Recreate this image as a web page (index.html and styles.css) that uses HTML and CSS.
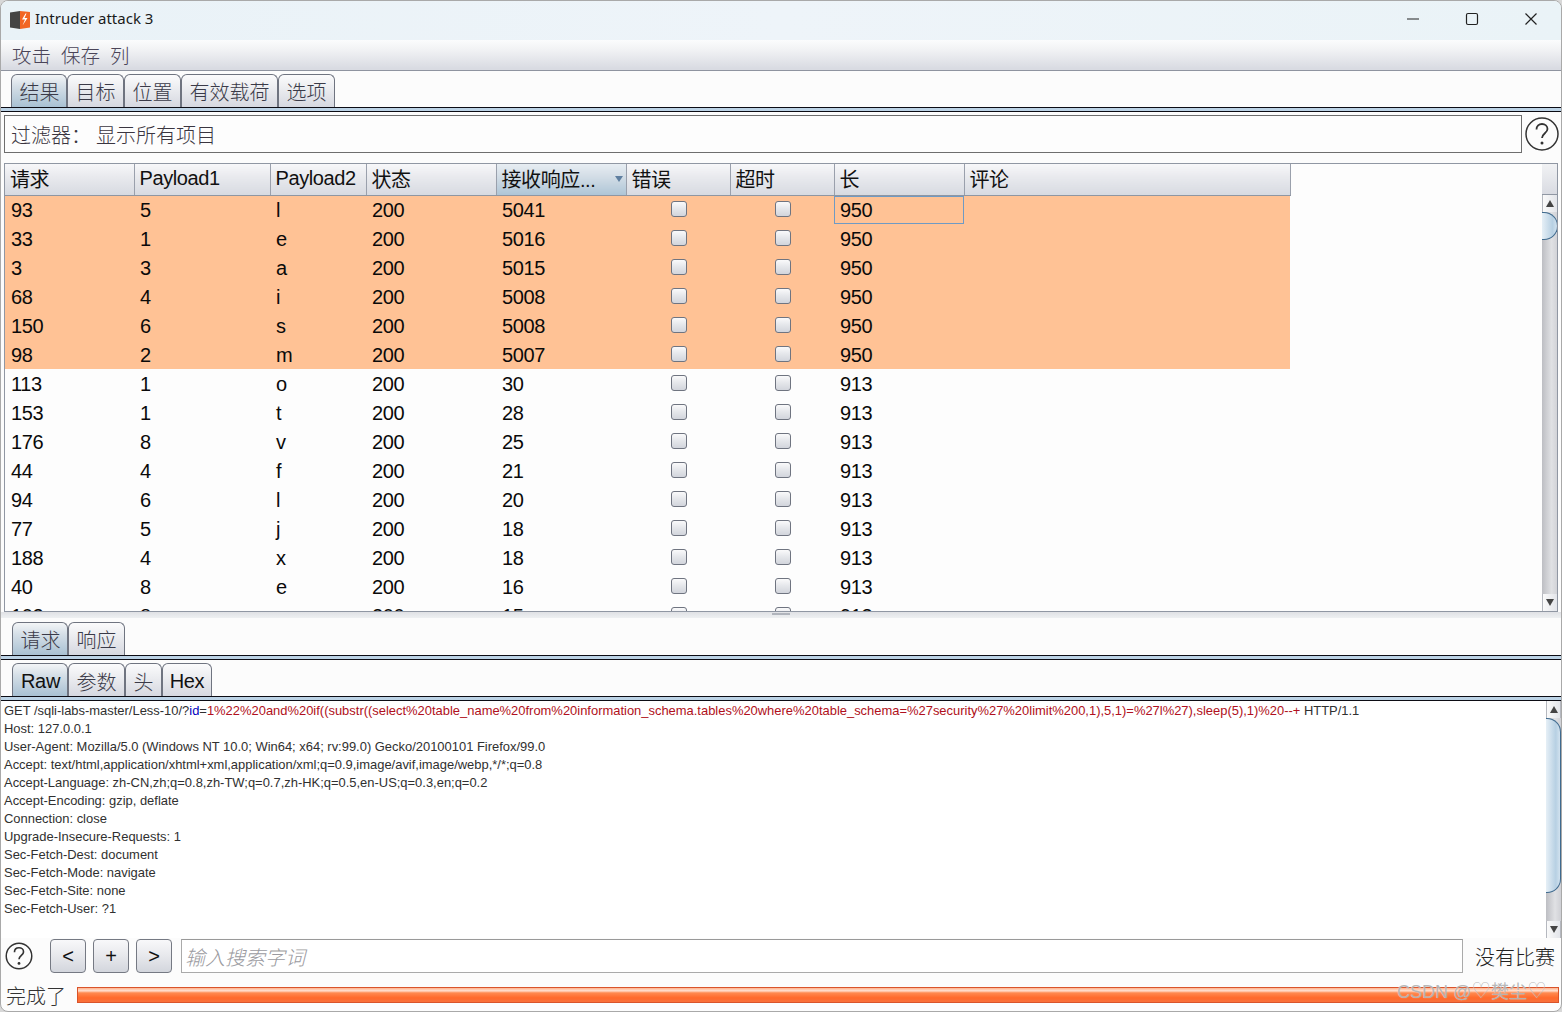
FILE: index.html
```html
<!DOCTYPE html>
<html lang="zh">
<head>
<meta charset="utf-8">
<title>Intruder attack 3</title>
<link rel="stylesheet" href="styles.css">
</head>
<body>
<div class="window">
  <header class="titlebar">
    <svg class="logo" width="20" height="20" viewBox="0 0 20 20"><path d="M0 2.500L10 1v18L0 17.500z" fill="#444"/><path d="M10 1l10 1v15.500L10 19z" fill="#f26522"/><path d="M15.500 3.500l-3.500 6h3l-2.500 6 5-7.500h-3l2-4.500z" fill="#fff"/></svg>
    <span class="title-text">Intruder attack 3</span>
    <div class="winctrls">
      <svg width="14" height="14" viewBox="0 0 14 14"><path d="M1 7h12" stroke="#222" stroke-width="1.200"/></svg>
      <svg width="14" height="14" viewBox="0 0 14 14"><rect x="1.500" y="1.500" width="11" height="11" rx="1.500" fill="none" stroke="#222" stroke-width="1.200"/></svg>
      <svg width="14" height="14" viewBox="0 0 14 14"><path d="M1.500 1.500l11 11M12.500 1.500l-11 11" stroke="#222" stroke-width="1.200"/></svg>
    </div>
  </header>
  <nav class="menubar"><span>攻击</span><span>保存</span><span>列</span></nav>

  <div class="tabs tabs-main">
    <span class="tab active">结果</span><span class="tab">目标</span><span class="tab">位置</span><span class="tab tab-wide">有效载荷</span><span class="tab">选项</span>
  </div>
  <div class="tabline"></div>

  <div class="filter-row">
    <div class="filter-box"><span class="filter-label">过滤器：</span><span>显示所有项目</span></div>
    <svg class="help help-lg" width="34" height="34" viewBox="0 0 34 34"><circle cx="17" cy="17" r="16" fill="none" stroke="#333" stroke-width="1.500"/><path d="M11.500 12.500c0-3.500 2.500-5.500 5.500-5.500s5.500 2 5.500 5c0 4-5.500 4.500-5.500 9" fill="none" stroke="#333" stroke-width="1.800"/><circle cx="17" cy="26" r="1.500" fill="#333"/></svg>
  </div>

  <section class="table-pane">
    <div class="table-scroll">
      <table class="results">
        <colgroup><col class="c1"><col class="c2"><col class="c3"><col class="c4"><col class="c5"><col class="c6"><col class="c7"><col class="c8"><col class="c9"></colgroup>
        <thead>
          <tr><th>请求</th><th>Payload1</th><th>Payload2</th><th>状态</th><th class="sorted">接收响应...<i class="sort-arrow"></i></th><th>错误</th><th>超时</th><th>长</th><th>评论</th></tr>
        </thead>
        <tbody>
          <tr class="hit"><td>93</td><td>5</td><td>l</td><td>200</td><td>5041</td><td class="ck"><i></i></td><td class="ck"><i></i></td><td class="focus">950</td><td></td></tr>
          <tr class="hit"><td>33</td><td>1</td><td>e</td><td>200</td><td>5016</td><td class="ck"><i></i></td><td class="ck"><i></i></td><td>950</td><td></td></tr>
          <tr class="hit"><td>3</td><td>3</td><td>a</td><td>200</td><td>5015</td><td class="ck"><i></i></td><td class="ck"><i></i></td><td>950</td><td></td></tr>
          <tr class="hit"><td>68</td><td>4</td><td>i</td><td>200</td><td>5008</td><td class="ck"><i></i></td><td class="ck"><i></i></td><td>950</td><td></td></tr>
          <tr class="hit"><td>150</td><td>6</td><td>s</td><td>200</td><td>5008</td><td class="ck"><i></i></td><td class="ck"><i></i></td><td>950</td><td></td></tr>
          <tr class="hit"><td>98</td><td>2</td><td>m</td><td>200</td><td>5007</td><td class="ck"><i></i></td><td class="ck"><i></i></td><td>950</td><td></td></tr>
          <tr><td>113</td><td>1</td><td>o</td><td>200</td><td>30</td><td class="ck"><i></i></td><td class="ck"><i></i></td><td>913</td><td></td></tr>
          <tr><td>153</td><td>1</td><td>t</td><td>200</td><td>28</td><td class="ck"><i></i></td><td class="ck"><i></i></td><td>913</td><td></td></tr>
          <tr><td>176</td><td>8</td><td>v</td><td>200</td><td>25</td><td class="ck"><i></i></td><td class="ck"><i></i></td><td>913</td><td></td></tr>
          <tr><td>44</td><td>4</td><td>f</td><td>200</td><td>21</td><td class="ck"><i></i></td><td class="ck"><i></i></td><td>913</td><td></td></tr>
          <tr><td>94</td><td>6</td><td>l</td><td>200</td><td>20</td><td class="ck"><i></i></td><td class="ck"><i></i></td><td>913</td><td></td></tr>
          <tr><td>77</td><td>5</td><td>j</td><td>200</td><td>18</td><td class="ck"><i></i></td><td class="ck"><i></i></td><td>913</td><td></td></tr>
          <tr><td>188</td><td>4</td><td>x</td><td>200</td><td>18</td><td class="ck"><i></i></td><td class="ck"><i></i></td><td>913</td><td></td></tr>
          <tr><td>40</td><td>8</td><td>e</td><td>200</td><td>16</td><td class="ck"><i></i></td><td class="ck"><i></i></td><td>913</td><td></td></tr>
          <tr><td>102</td><td>8</td><td>e</td><td>200</td><td>15</td><td class="ck"><i></i></td><td class="ck"><i></i></td><td>913</td><td></td></tr>
        </tbody>
      </table>
    </div>
    <div class="vscroll vscroll-table">
      <div class="vs-corner"></div>
      <div class="vs-btn"><i class="up"></i></div>
      <div class="vs-track"><div class="vs-thumb thumb-small"></div></div>
      <div class="vs-btn"><i class="down"></i></div>
    </div>
  </section>

  <div class="splitter"><i class="grip"></i></div>

  <div class="tabs tabs-sub">
    <span class="tab active">请求</span><span class="tab">响应</span>
  </div>
  <div class="tabline"></div>
  <div class="tabs tabs-raw">
    <span class="tab active latin">Raw</span><span class="tab">参数</span><span class="tab tab-one">头</span><span class="tab latin tab-hex">Hex</span>
  </div>
  <div class="tabline"></div>

  <section class="raw-pane">
    <pre class="raw">GET /sqli-labs-master/Less-10/?<b class="k">id</b>=<b class="v">1%22%20and%20if((substr((select%20table_name%20from%20information_schema.tables%20where%20table_schema=%27security%27%20limit%200,1),5,1)=%27l%27),sleep(5),1)%20--+</b> HTTP/1.1
Host: 127.0.0.1
User-Agent: Mozilla/5.0 (Windows NT 10.0; Win64; x64; rv:99.0) Gecko/20100101 Firefox/99.0
Accept: text/html,application/xhtml+xml,application/xml;q=0.9,image/avif,image/webp,*/*;q=0.8
Accept-Language: zh-CN,zh;q=0.8,zh-TW;q=0.7,zh-HK;q=0.5,en-US;q=0.3,en;q=0.2
Accept-Encoding: gzip, deflate
Connection: close
Upgrade-Insecure-Requests: 1
Sec-Fetch-Dest: document
Sec-Fetch-Mode: navigate
Sec-Fetch-Site: none
Sec-Fetch-User: ?1</pre>
    <div class="vscroll vscroll-raw">
      <div class="vs-btn"><i class="up"></i></div>
      <div class="vs-track"><div class="vs-thumb thumb-long"></div></div>
      <div class="vs-btn"><i class="down"></i></div>
    </div>
  </section>

  <div class="search-row">
    <svg class="help" width="28" height="28" viewBox="0 0 34 34"><circle cx="17" cy="17" r="15.500" fill="none" stroke="#333" stroke-width="1.800"/><path d="M11.500 12.500c0-3.500 2.500-5.500 5.500-5.500s5.500 2 5.500 5c0 4-5.500 4.500-5.500 9" fill="none" stroke="#333" stroke-width="2"/><circle cx="17" cy="26" r="1.700" fill="#333"/></svg>
    <button class="btn">&lt;</button>
    <button class="btn">+</button>
    <button class="btn">&gt;</button>
    <div class="search-input">输入搜索字词</div>
    <span class="matches">没有比赛</span>
  </div>

  <footer class="status">
    <span class="status-text">完成了</span>
    <div class="progress"></div>
    <span class="watermark">CSDN @<span class="heart">♡</span>樊尘<span class="heart">♡</span></span>
  </footer>
</div>
</body>
</html>
```
FILE: styles.css
```css
* { box-sizing: border-box; }
html, body { margin: 0; padding: 0; background: #d8d8d8; }
body { width: 1562px; height: 1012px; overflow: hidden; font-family: "Noto Sans CJK SC", "Liberation Sans", serif; }
.window {
  position: relative;
  width: 1562px; height: 1012px;
  display: flex; flex-direction: column;
  background: #fcfcfc;
  border: 1px solid #a9a9a9;
  border-radius: 8px;
  overflow: hidden;
  color: #222;
}
.titlebar {
  height: 39px; flex: none;
  display: flex; align-items: center;
  padding-left: 9px;
  background: linear-gradient(90deg, #e9f2f7, #eef4f9 50%, #eaf3f7);
}
.logo { flex: none; margin-right: 5px; margin-top: -1px; }
.title-text { font: 15px "Noto Sans", sans-serif; color: #1a1a1a; margin-top: -5px; }
.winctrls { margin-left: auto; display: flex; gap: 45px; padding-right: 23px; margin-top: -3px; }
.menubar {
  height: 31px; flex: none;
  display: flex; gap: 10px; align-items: center;
  padding: 0 0 1px 11px;
  font-size: 19.500px; font-weight: 300; color: #4a4458;
  background: linear-gradient(#fbfcfd, #f2f3f5 30%, #d9dbe2 95%);
  border-bottom: 1px solid #8f94a0;
}
.tabs { display: flex; flex: none; align-items: flex-end; padding-left: 10px; }
.tabs-main { height: 36px; }
.tabs-sub { height: 34px; margin-top: 3px; padding-left: 11px; }
.tabs-raw { height: 33px; margin-top: 3px; padding-left: 11px; }
.tabs-raw .tab { padding-top: 2px; }
.tab {
  height: 33px;
  width: 57px;
  display: flex; align-items: center; justify-content: center;
  font-size: 20px; font-weight: 300; color: #3a3a48;
  border: 1px solid #6f7480; border-bottom: 0; border-radius: 6px 6px 0 0;
  background: linear-gradient(#fbfbfc, #eeeff2 35%, #d6d8e0);
}
.tab.active { width: 56px; padding-left: 1px; background: linear-gradient(#f3f5f7, #d5dfe7 35%, #a9c1d3); }
.tab-wide { width: 97px; }
.tab-one { width: 37px; }
.tab-hex { width: 50px; }
.tab.latin { font-family: "Liberation Sans", sans-serif; font-weight: 400; color: #111; letter-spacing: -.3px; }
.tabline {
  height: 5px; flex: none;
  background: #bcd3e6;
  border-top: 1px solid #0c0c14; border-bottom: 1px solid #0c0c14;
}
.filter-row { flex: none; display: flex; align-items: center; height: 38px; margin-top: 3px; padding-left: 3px; }
.filter-box {
  width: 1518px; height: 38px;
  border: 1px solid #6e6e6e;
  display: flex; align-items: center;
  padding-left: 6px; font-size: 20px; font-weight: 300; color: #3a3540;
  background: #fdfdfd;
}
.filter-label { width: 85px; }
.help { flex: none; }
.help-lg { margin-left: 3px; }
.table-pane {
  flex: none; height: 449px; margin: 10px 3px 0 3px;
  display: flex;
  border: 1px solid #9097a3;
  background: #fdfdfd;
  overflow: hidden;
}
.table-scroll { width: 1537px; flex: none; overflow: hidden; }
.results { border-collapse: collapse; table-layout: fixed; width: 1285px; font-family: "Liberation Sans", sans-serif; }
.c1 { width: 129px; } .c2 { width: 136px; } .c3 { width: 96px; } .c4 { width: 130px; } .c5 { width: 130px; }
.c6 { width: 104px; } .c7 { width: 104px; } .c8 { width: 130px; } .c9 { width: 326px; }
.results th {
  height: 31px; padding: 0 0 1px 5px; text-align: left;
  font-size: 20px; font-weight: 400; color: #111; letter-spacing: -.4px;
  background: linear-gradient(#f7f7f9, #e9eaee 40%, #d7dae1);
  border-right: 1px solid #9aa0ac; border-bottom: 1px solid #8f96a2;
  white-space: nowrap;
  position: relative;
  font-family: "Liberation Sans", "Noto Sans CJK SC", sans-serif;
}
.results th.sorted { background: linear-gradient(#e7edf2, #d3dde6 40%, #aec5d6); }
.sort-arrow {
  position: absolute; right: 3px; top: 12px;
  border: 4px solid transparent; border-top: 6px solid #5f7fa0; border-bottom: 0;
}
.results td {
  height: 29px; padding: 1px 0 0 6px;
  font-size: 20px; color: #0a0a0a; line-height: 1; letter-spacing: -.35px;
}
.results tr.hit td { background: #ffc295; }
.results td.focus { box-shadow: inset 0 0 0 1px #6f9ac4; }
.results .ck { text-align: center; padding: 0 0 0 2px; }
.ck i {
  display: block; width: 16px; height: 16px; margin: -2px auto 0;
  border: 1px solid #6f7480; border-radius: 3px;
  background: linear-gradient(#fafafb, #e4e6ea 50%, #d2d5dc);
}
.vscroll { display: flex; flex-direction: column; background: #fdfdfd; }
.vscroll-table { width: 16px; flex: none; }
.vs-corner { height: 31px; flex: none; background: linear-gradient(#f1f2f4, #d9dbe2); border-bottom: 1px solid #9097a3; }
.vs-btn {
  height: 17px; flex: none; display: flex; align-items: center; justify-content: center;
  background: linear-gradient(90deg, #fafafa, #e3e5ea);
  border: 1px solid #b5b8bf; border-width: 0 1px;
}
.vs-btn .up { border: 4px solid transparent; border-bottom: 7px solid #444; border-top: 0; }
.vs-btn .down { border: 4px solid transparent; border-top: 7px solid #444; border-bottom: 0; }
.vs-track { flex: 1; background: linear-gradient(90deg, #bdbec3, #e0e1e4 60%, #cfd0d5); position: relative; overflow: hidden; }
.vs-thumb {
  position: absolute; right: 0; left: 0;
  border: 1px solid #3f6a8e; border-left: 0;
  background: linear-gradient(90deg, #e6eff6, #b7d0e3 70%, #d2e2ef);
  border-radius: 0 14px 14px 0;
}
.thumb-small { top: 0; height: 28px; }
.thumb-long { top: 0; height: 175px; }
.splitter { flex: none; height: 6px; display: flex; justify-content: center; background: linear-gradient(#e0e1e5, #eef0f2); }
.grip { width: 18px; height: 2px; margin-top: 1px; background: #b0b4bc; }
.raw-pane { flex: none; height: 237px; display: flex; background: #fff; }
.raw {
  flex: 1; margin: 0; padding: 1px 0 0 3px; overflow: hidden;
  font: 12.950px/18px "Liberation Sans", sans-serif; color: #303030;
}
.raw b { font-weight: 400; }
.raw .k { color: #0000c0; }
.raw .v { color: #b01020; }
.vscroll-raw { width: 15px; flex: none; }
.search-row { flex: none; height: 34px; display: flex; align-items: center; padding-left: 4px; margin-top: 1px; }
.btn {
  width: 36px; height: 34px; margin-left: 7px; padding: 0;
  font: 20px "Liberation Sans", sans-serif; color: #111;
  border: 1px solid #757983; border-radius: 4px;
  background: linear-gradient(#f8f8fa, #e7e8ec 50%, #d3d6dd);
}
.btn:first-of-type { margin-left: 17px; }
.search-input {
  width: 1282px; height: 34px; margin-left: 9px;
  border: 1px solid #aaa; border-top-color: #999;
  display: flex; align-items: center; padding-left: 3px;
  font-size: 20px; font-weight: 300; font-style: italic; color: #9a9aa0;
  background: #fff;
}
.matches { margin-left: 12px; font-size: 20px; font-weight: 300; color: #222; white-space: nowrap; }
.status { flex: none; display: flex; align-items: center; height: 38px; position: relative; padding-left: 5px; }
.status-text { font-size: 20px; font-weight: 300; width: 71px; color: #333; margin-top: 6px; }
.progress {
  width: 1482px; height: 16px; margin-top: 5px;
  border: 1px solid #d9532a;
  background: linear-gradient(#ffb48f, #ffe0d0 20%, #ff8a50 35%, #ff6a2c 70%, #f8703a);
}
.watermark {
  position: absolute; left: 1396px; top: 4px;
  font: 18px "Liberation Sans", "Noto Sans CJK SC", sans-serif;
  color: rgba(175,175,175,.9); text-shadow: 0 0 1px rgba(255,255,255,.6); white-space: nowrap;
}
.heart { font-family: "DejaVu Sans", sans-serif; font-size: 22px; line-height: 1; }
```
